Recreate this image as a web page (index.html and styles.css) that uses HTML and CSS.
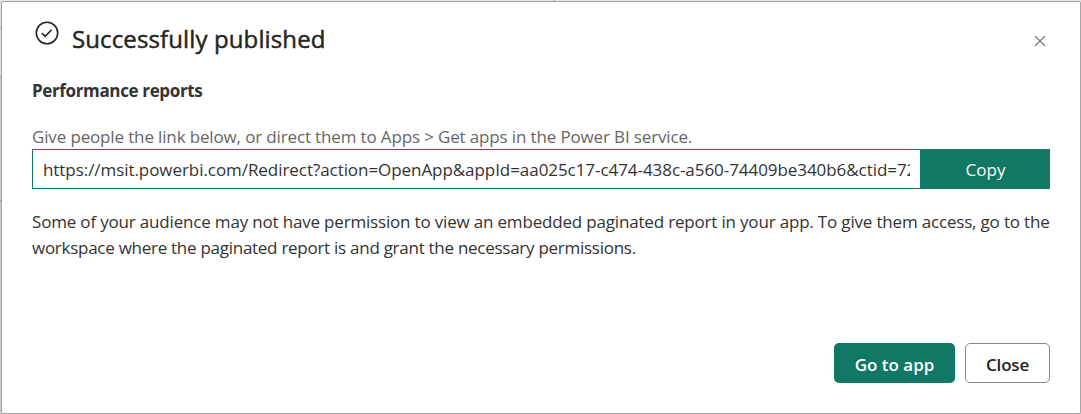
FILE: index.html
```html
<!DOCTYPE html>
<html lang="en">
<head>
<meta charset="utf-8">
<title>Successfully published</title>
<link rel="stylesheet" href="styles.css">
</head>
<body>
<main class="dialog" role="dialog" aria-labelledby="title">
  <header class="header">
    <svg class="check" viewBox="0 0 24 24" aria-hidden="true"><circle cx="12" cy="12" r="10.7"/><path d="M6.9 12.2l3.3 3.1 6.4-6.5"/></svg>
    <h1 class="title" id="title">Successfully published</h1>
    <button class="dismiss" aria-label="Dismiss"><svg viewBox="0 0 12 12"><path d="M1 1l10 10M11 1L1 11"/></svg></button>
  </header>
  <h2 class="name">Performance reports</h2>
  <p class="hint">Give people the link below, or direct them to Apps &gt; Get apps in the Power BI service.</p>
  <div class="link">
    <div class="url"><div class="url-text">https://msit.powerbi.com/Redirect?action=OpenApp&amp;appId=aa025c17-c474-438c-a560-74409be340b6&amp;ctid=72</div></div>
    <button class="copy">Copy</button>
  </div>
  <p class="note"><span class="note-first">Some of your audience may not have permission to view an embedded paginated report in your app. To give them access, go to the</span><br><span class="note-second">workspace where the paginated report is and grant the necessary permissions.</span></p>
  <footer class="actions">
    <button class="button primary">Go to app</button>
    <button class="button secondary">Close</button>
  </footer>
</main>
</body>
</html>
```
FILE: styles.css
```css
* { box-sizing: border-box; }
body {
  margin: 0;
  width: 1081px;
  height: 414px;
  padding: 1px 0 0 1px;
  overflow: hidden;
  font-family: "Open Sans", "Noto Sans", sans-serif;
  font-size: 17px;
  color: #333;
  background:
    linear-gradient(#999, #999) 554px 0 / 1px 1px no-repeat,
    linear-gradient(#e6e6e6, #e6e6e6) 0 0 / 100% 1px no-repeat,
    linear-gradient(#ddd 27px, #999 27px, #999 28px, #ddd 28px, #ddd 76px, #999 76px, #999 77px, #c8c8c8 77px, #c8c8c8 200px, #999 200px, #999 201px, #c8c8c8 201px);
}
h1, h2, p { margin: 0; font-size: inherit; white-space: nowrap; }
button { font: inherit; padding: 0; border: 0; cursor: pointer; }
.dialog {
  width: 1080px;
  height: 413px;
  display: flex;
  flex-direction: column;
  padding: 19px 30px 30px;
  border: 1px solid #a6a6a6;
  border-radius: 2px;
  background: #fff;
}
.header { display: flex; height: 58px; padding-left: 3px; }
.check { width: 24px; height: 24px; fill: none; stroke: #252423; stroke-width: 1.6; }
.title { margin: 0 0 0 13px; font-size: 24px; font-weight: 500; line-height: 36px; letter-spacing: 0.12px; color: #252423; -webkit-text-stroke: 0.45px #252423; }
.dismiss { margin: 14px 4px 0 auto; width: 12px; height: 12px; background: none; }
.dismiss svg { display: block; width: 12px; height: 12px; stroke: #777; stroke-width: 1.2; }
.name { height: 46px; line-height: 24px; font-weight: 700; letter-spacing: -0.36px; }
.hint { height: 24px; line-height: 24px; letter-spacing: -0.145px; color: #666; }
.link { display: flex; height: 40px; }
.url { width: 889px; padding: 0 10px; border: 1px solid #117865; }
.url-text { overflow: hidden; white-space: nowrap; line-height: 39px; letter-spacing: -0.06px; }
.copy { flex: 1; color: #fff; background: #117865; }
.note { margin-top: 20px; line-height: 26px; }
.note-first { letter-spacing: -0.18px; }
.note-second { letter-spacing: -0.27px; }
.actions { display: flex; justify-content: flex-end; gap: 10px; margin-top: auto; }
.button { height: 40px; padding-top: 3px; border-radius: 5px; font-weight: 600; }
.primary { width: 121px; color: #fff; background: #117865; }
.secondary { width: 85px; letter-spacing: -0.2px; color: #252423; background: #fff; border: 1px solid #8a8886; }
```
